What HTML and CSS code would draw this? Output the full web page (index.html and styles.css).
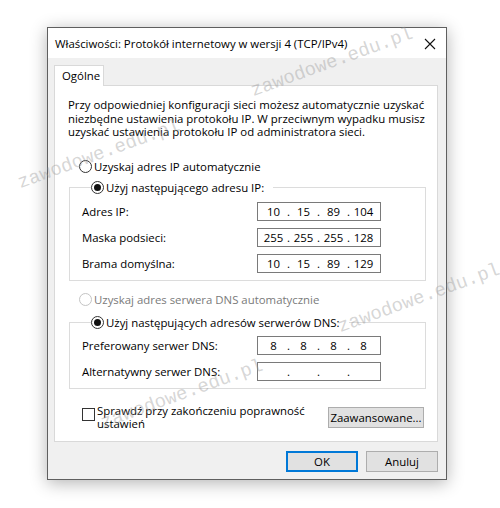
FILE: index.html
```html
<!DOCTYPE html>
<html lang="pl">
<head>
  <meta charset="UTF-8" />
  <title>Właściwości: Protokół internetowy w wersji 4 (TCP/IPv4)</title>
  <link rel="stylesheet" href="styles.css">
</head>
<body>
  <!-- Okno dialogowe -->
  <div class="window">
    <div class="titlebar">
      <span class="title">Właściwości: Protokół internetowy w wersji 4 (TCP/IPv4)</span>
      <svg class="close" width="12" height="12" viewBox="0 0 12 12">
        <path d="M1 1 L11 11 M11 1 L1 11" stroke="#111" stroke-width="1.1" fill="none"/>
      </svg>
    </div>

    <div class="content">
      <div class="tabs">
        <div class="tab">Ogólne</div>
      </div>

      <div class="panel">
        <p class="desc">Przy odpowiedniej konfiguracji sieci możesz automatycznie uzyskać niezbędne ustawienia protokołu IP. W przeciwnym wypadku musisz uzyskać ustawienia protokołu IP od administratora sieci.</p>

        <div class="radio-line">
          <span class="radio"></span>Uzyskaj adres IP automatycznie
        </div>

        <fieldset class="group">
          <legend><span class="radio checked"></span>Użyj następującego adresu IP:</legend>
          <div class="field">
            <span>Adres IP:</span>
            <div class="ip"><span>10</span><i>.</i><span>15</span><i>.</i><span>89</span><i>.</i><span>104</span></div>
          </div>
          <div class="field">
            <span>Maska podsieci:</span>
            <div class="ip"><span>255</span><i>.</i><span>255</span><i>.</i><span>255</span><i>.</i><span>128</span></div>
          </div>
          <div class="field">
            <span>Brama domyślna:</span>
            <div class="ip"><span>10</span><i>.</i><span>15</span><i>.</i><span>89</span><i>.</i><span>129</span></div>
          </div>
        </fieldset>

        <div class="radio-line disabled second">
          <span class="radio"></span>Uzyskaj adres serwera DNS automatycznie
        </div>

        <fieldset class="group dns">
          <legend><span class="radio checked"></span>Użyj następujących adresów serwerów DNS:</legend>
          <div class="field">
            <span>Preferowany serwer DNS:</span>
            <div class="ip"><span>8</span><i>.</i><span>8</span><i>.</i><span>8</span><i>.</i><span>8</span></div>
          </div>
          <div class="field">
            <span>Alternatywny serwer DNS:</span>
            <div class="ip"><span></span><i>.</i><span></span><i>.</i><span></span><i>.</i><span></span></div>
          </div>
        </fieldset>

        <div class="verify">
          <div class="check-label">
            <span class="checkbox"></span>
            <span class="check-text">Sprawdź przy zakończeniu poprawność<br>ustawień</span>
          </div>
          <button class="btn advanced">Zaawansowane...</button>
        </div>
      </div>

      <div class="buttons">
        <button class="btn default">OK</button>
        <button class="btn">Anuluj</button>
      </div>
    </div>
  </div>

  <!-- znak wodny -->
  <span class="wm wm1">zawodowe.edu.pl</span>
  <span class="wm wm2">zawodowe.edu.pl</span>
  <span class="wm wm3">zawodowe.edu.pl</span>
  <span class="wm wm4">zawodowe.edu.pl</span>
</body>
</html>
```

FILE: styles.css
```css
* {
  margin: 0;
  padding: 0;
  box-sizing: border-box;
}

body {
  background-color: #fff;
  font-family: 'Segoe UI', 'Open Sans', sans-serif;
  font-size: 11.4px;
  color: #000;
  padding: 27px 0 0 47px;
  height: 508px;
  overflow: hidden;
}

.window {
  width: 400px;
  border: 1px solid #5f5f5f;
  background-color: #f0f0f0;
  box-shadow: 0 3px 16px rgba(0, 0, 0, 0.3);
}

.titlebar {
  height: 30px;
  background-color: #fff;
  display: flex;
  align-items: center;
  justify-content: space-between;
  padding: 0 10px 0 7px;
}

.close {
  margin-top: 1px;
}

.content {
  padding: 7px 8px 7px 6px;
}

.tabs {
  display: flex;
}

.tab {
  position: relative;
  width: 50px;
  height: 21px;
  margin-bottom: -1px;
  padding: 2px 0 0 7px;
  background-color: #fff;
  border: 1px solid #d9d9d9;
  border-bottom: none;
}

.panel {
  background-color: #fff;
  border: 1px solid #d9d9d9;
  padding: 12px 11px 11px 14px;
}

.desc {
  line-height: 13.5px;
  margin-left: -1px;
}

.radio-line {
  display: flex;
  align-items: center;
  gap: 2px;
  height: 16px;
  margin-top: 20px;
  padding-left: 10px;
}

.radio-line.second {
  margin-top: 11px;
}

.radio-line.disabled {
  color: #7a7a7a;
}

.radio {
  width: 13px;
  height: 13px;
  border: 1px solid #333;
  border-radius: 50%;
  background-color: #fff;
  display: flex;
  align-items: center;
  justify-content: center;
  flex-shrink: 0;
}

.disabled .radio {
  border-color: #c4c4c4;
}

.radio.checked::after {
  content: "";
  width: 7px;
  height: 7px;
  border-radius: 50%;
  background-color: #111;
}

.group {
  border: 1px solid #dcdcdc;
  margin-top: 5px;
  padding: 6px 0 7px 12px;
  display: flex;
  flex-direction: column;
  gap: 7px;
}

.group.dns {
  margin-top: 7px;
  padding-top: 5px;
}

.group legend {
  display: flex;
  align-items: center;
  gap: 2px;
  height: 16px;
  margin-left: 9px;
  padding-right: 9px;
}

.field {
  display: grid;
  grid-template-columns: 175px 124px;
  align-items: center;
}

.ip {
  height: 19px;
  border: 1px solid #7a7a7a;
  display: flex;
  align-items: center;
  padding-left: 4px;
}

.ip span {
  width: 23px;
  text-align: center;
}

.ip i {
  font-style: normal;
  width: 7px;
  text-align: center;
}

.verify {
  display: flex;
  justify-content: space-between;
  align-items: flex-start;
  margin: 15px 2px 0 13px;
}

.check-label {
  display: flex;
  align-items: flex-start;
  gap: 2px;
}

.checkbox {
  width: 13px;
  height: 13px;
  margin-top: 4px;
  border: 1px solid #333;
  background-color: #fff;
}

.check-text {
  line-height: 13px;
}

.btn {
  font-family: inherit;
  font-size: 11.4px;
  color: #000;
  background-color: #e1e1e1;
  border: 1px solid #adadad;
  height: 21px;
  width: 72px;
}

.btn.advanced {
  width: 96px;
  margin-top: 3px;
}

.btn.default {
  border: 2px solid #0078d7;
}

.buttons {
  display: flex;
  justify-content: flex-end;
  gap: 8px;
  margin-top: 9px;
}

/* znak wodny */
.wm {
  position: absolute;
  font-family: 'Liberation Mono', monospace;
  font-size: 19px;
  line-height: 19px;
  color: rgba(150, 150, 150, 0.4);
  transform: rotate(-20deg);
  transform-origin: 0 100%;
  white-space: nowrap;
  pointer-events: none;
}

.wm1 { left: 255px; top: 82px; }
.wm2 { left: 22px; top: 174px; }
.wm3 { left: 342px; top: 318px; }
.wm4 { left: 105px; top: 414px; }
```
